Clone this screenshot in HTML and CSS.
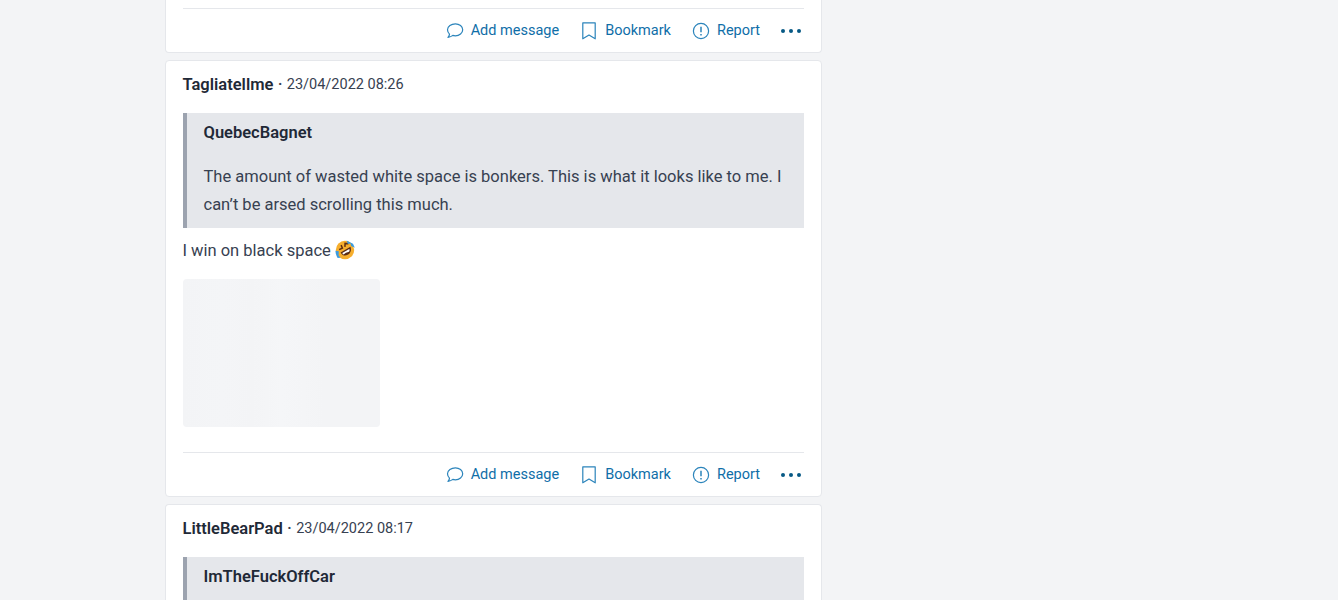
FILE: index.html
```html
<!DOCTYPE html>
<html lang="en">
<head>
    <meta charset="UTF-8">
    <meta name="viewport" content="width=device-width, initial-scale=1.0">
    <title>Thread</title>
    <link rel="stylesheet" href="styles.css">
</head>
<body>

    <main class="thread">

        <article class="post post-cut">
            <footer class="actions">
                <a class="action"><svg class="icon" viewBox="0 0 18 18"><path d="M9.400 1.800c4 0 7.300 2.700 7.300 6s-3.300 6-7.300 6c-.9 0-1.800-.1-2.600-.4-1.200 1-2.800 1.700-4.800 2 .9-1 1.400-2.100 1.500-3.300C2.300 11 1.500 9.500 1.500 7.800c0-3.300 3.700-6 7.900-6z"/></svg>Add message</a>
                <a class="action"><svg class="icon" viewBox="0 0 18 18"><path d="M2.800 .8h12.400v16L9 13l-6.200 3.800z"/></svg>Bookmark</a>
                <a class="action"><svg class="icon" viewBox="0 0 18 18"><circle cx="9" cy="9" r="7.600"/><path class="mark" d="M9 4.800v5.400M9 12v1.500"/></svg>Report</a>
                <a class="more"><span></span><span></span><span></span></a>
            </footer>
        </article>

        <article class="post">
            <header class="post-head"><strong>Tagliatellme</strong><span class="sep">·</span><time>23/04/2022 08:26</time></header>
            <blockquote class="quote">
                <h4>QuebecBagnet</h4>
                <p>The amount of wasted white space is bonkers. This is what it looks like to me. I can’t be arsed scrolling this much.</p>
            </blockquote>
            <p class="body-text">I win on black space
                <svg class="emoji" viewBox="0 0 20 20">
                    <circle cx="10" cy="10" r="9.200" fill="#f6ae2d"/>
                    <path d="M5.600 12.600 15.400 6.800c1.300 3.200.1 6.400-2.700 8-2.800 1.500-5.600.6-7.100-2.200z" fill="#5b2c14"/>
                    <path d="M7.300 13 14.300 8.900c.5 1.200.3 2.200-.3 2.900-1.800 .2-4.500 1.800-5.300 2.700-.7-.2-1.100-.9-1.400-1.500z" fill="#fff"/>
                    <path d="M4.200 9.700l3.200-1.600-1.300-3M9.900 6.900l.2-3.500 3.300 .3" fill="none" stroke="#5b2c14" stroke-width="1.500"/>
                    <path d="M.4 10.800l3.400 .4-.2 4.200 2 2.300-3 .2C1.300 15.800 .5 13.400 .4 10.800zM11.500 .4l6.500 3.300 1.800 4-3.600-1.800-.6-2.300-2.700 .3z" fill="#3b9be0"/>
                </svg>
            </p>
            <div class="picture"></div>
            <footer class="actions">
                <a class="action"><svg class="icon" viewBox="0 0 18 18"><path d="M9.400 1.800c4 0 7.300 2.700 7.300 6s-3.300 6-7.300 6c-.9 0-1.800-.1-2.600-.4-1.200 1-2.800 1.700-4.800 2 .9-1 1.400-2.100 1.500-3.300C2.300 11 1.500 9.500 1.500 7.800c0-3.300 3.700-6 7.900-6z"/></svg>Add message</a>
                <a class="action"><svg class="icon" viewBox="0 0 18 18"><path d="M2.800 .8h12.400v16L9 13l-6.200 3.800z"/></svg>Bookmark</a>
                <a class="action"><svg class="icon" viewBox="0 0 18 18"><circle cx="9" cy="9" r="7.600"/><path class="mark" d="M9 4.800v5.400M9 12v1.500"/></svg>Report</a>
                <a class="more"><span></span><span></span><span></span></a>
            </footer>
        </article>

        <article class="post post-tail">
            <header class="post-head"><strong>LittleBearPad</strong><span class="sep">·</span><time>23/04/2022 08:17</time></header>
            <blockquote class="quote quote-cut">
                <h4>ImTheFuckOffCar</h4>
            </blockquote>
        </article>

    </main>

</body>
</html>
```

FILE: styles.css
```css
html, body {
    margin: 0;
    height: 600px;
    overflow: hidden;
}

body {
    background-color: #f3f4f6;
    font-family: Roboto, "Liberation Sans", sans-serif;
    color: #1f2937;
    font-size: 16.5px;
}

.thread {
    width: 657.500px;
    margin-left: 164.500px;
    display: flex;
    flex-direction: column;
    gap: 7px;
}

.post {
    background-color: #fff;
    border: 1px solid #e5e7eb;
    border-radius: 4px;
    padding: 0 17px;
}

.post-cut {
    border-top: 0;
    border-radius: 0 0 4px 4px;
    padding-top: 8px;
}

.post-tail {
    border-bottom: 0;
    border-radius: 4px 4px 0 0;
}

.post-head {
    display: flex;
    align-items: center;
    height: 46px;
    margin-bottom: 6px;
    font-size: 14.5px;
    color: #374151;
}

.post-head strong {
    font-size: 16.5px;
    font-weight: 600;
    color: #1f2937;
}

.sep {
    margin: 0 4.500px;
    font-weight: 700;
}

.quote {
    margin: 0;
    background-color: #e5e7eb;
    border-left: 4px solid #9ca3af;
    padding: 9px 17px;
}

.quote-cut {
    padding-bottom: 12px;
}

.quote h4 {
    margin: 0;
    font-size: 16.5px;
    font-weight: 600;
    line-height: 22px;
}

.quote p {
    margin: 19px 0 0;
    line-height: 28px;
    color: #374151;
}

.body-text {
    margin: 9px 0 14px;
    line-height: 28px;
    color: #374151;
}

.emoji {
    width: 20px;
    height: 20px;
    vertical-align: -4px;
}

.picture {
    width: 197px;
    height: 148px;
    background-color: #f3f4f6;
    background-image: linear-gradient(90deg, #f3f4f6 0, #f4f5f7 20%, #f3f4f6 35%, #f5f6f8 50%, #f3f4f6 72%, #f3f4f6 100%);
    border-radius: 4px;
    margin-bottom: 25px;
}

.actions {
    display: flex;
    justify-content: flex-end;
    align-items: center;
    height: 43px;
    border-top: 1px solid #e5e7eb;
    font-size: 14.5px;
    color: #0f6ea8;
}

.action {
    display: flex;
    align-items: center;
    gap: 7px;
    margin-right: 21px;
}

.icon {
    width: 18px;
    height: 18px;
    fill: none;
    stroke: #2b84bb;
    stroke-width: 1.200;
    stroke-linejoin: round;
}

.icon .mark {
    stroke-width: 1.500;
}

.more {
    display: flex;
    gap: 4px;
    padding-right: 3px;
}

.more span {
    width: 4px;
    height: 4px;
    border-radius: 50%;
    background-color: #075985;
}
```
